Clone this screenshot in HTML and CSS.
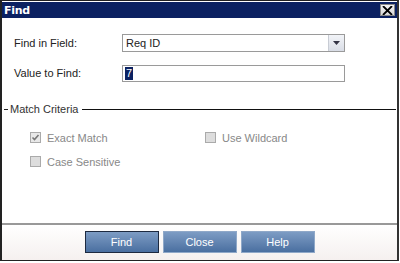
FILE: index.html
```html
<!DOCTYPE html>
<html>
<head>
<meta charset="utf-8">
<link rel="stylesheet" href="styles.css">
</head>
<body>
<div class="dialog">
  <div class="titlebar">
    <span class="title">Find</span>
    <span class="close"><svg width="11" height="9" viewBox="0 0 11 9"><path d="M1 0 L10 9 M10 0 L1 9" stroke="#000" stroke-width="1.8"/></svg></span>
  </div>
  <div class="content">
    <div class="row">
      <span class="label">Find in Field:</span>
      <div class="select">
        <span class="select-text">Req ID</span>
        <span class="arrow"><svg width="7" height="4" viewBox="0 0 7 4"><path d="M0 0 H7 L3.5 4 Z" fill="#334"/></svg></span>
      </div>
    </div>
    <div class="row row2">
      <span class="label">Value to Find:</span>
      <div class="input"><span class="sel">7</span></div>
    </div>
    <div class="group">
      <span class="dash"></span><span class="group-title">Match Criteria</span><span class="line"></span>
    </div>
    <div class="checks">
      <label class="check"><span class="box checked"><svg width="9" height="9" viewBox="0 0 9 9"><path d="M1.5 4.5 L3.5 6.5 L7.5 2" stroke="#777" stroke-width="1.6" fill="none"/></svg></span>Exact Match</label>
      <label class="check"><span class="box"></span>Use Wildcard</label>
      <label class="check"><span class="box"></span>Case Sensitive</label>
    </div>
  </div>
  <div class="footer">
    <button class="btn btn-default">Find</button>
    <button class="btn">Close</button>
    <button class="btn">Help</button>
  </div>
</div>
</body>
</html>
```
FILE: styles.css
```css
html, body { margin: 0; padding: 0; background: #fff; }
body { width: 400px; height: 263px; overflow: hidden; font-family: "Liberation Sans", Arial, sans-serif; font-size: 11px; color: #222; }
.dialog {
  box-sizing: border-box; width: 399px; height: 261px;
  border: 1px solid #222; border-left: 2px solid #222; border-right: 2px solid #333;
  background: #fff; display: flex; flex-direction: column;
}
.titlebar {
  height: 16px; margin-top: 1px; background: #0b2161;
  display: flex; align-items: center; justify-content: space-between; padding: 0 2px 0 2px;
}
.title { color: #fff; font-weight: bold; font-size: 11px; font-family: "DejaVu Sans", sans-serif; letter-spacing: -0.3px; }
.close {
  width: 15px; height: 12px; background: linear-gradient(#f4f4f4, #d8d8d8); border: 1px solid #888;
  box-sizing: border-box; display: flex; align-items: center; justify-content: center;
}
.content { flex: 1; padding: 16px 0 0 0; }
.row { display: flex; align-items: center; height: 18px; }
.row2 { margin-top: 12px; }
.label { width: 108px; padding-left: 12px; color: #222; }
.select {
  box-sizing: border-box; width: 223px; height: 18px; border: 1px solid #9a9a9a; background: #fff;
  display: flex; align-items: center; justify-content: space-between;
}
.select-text { padding-left: 3px; }
.arrow {
  width: 15px; height: 16px; background: linear-gradient(#f2f4f8, #d9dde6); border-left: 1px solid #c8ccd4;
  display: flex; align-items: center; justify-content: center;
}
.input {
  box-sizing: border-box; width: 223px; height: 17px; border: 1px solid #9a9a9a; background: #fff;
  display: flex; align-items: center; padding-left: 2px;
}
.sel { background: #0b2161; color: #fff; padding: 0 1px; line-height: 13px; }
.group { display: flex; align-items: center; margin-top: 21px; }
.dash { width: 4px; height: 1px; background: #222; margin-left: 2px; }
.group-title { padding: 0 4px 0 2px; color: #333; }
.line { flex: 1; height: 1px; background: #111; margin-right: 1px; }
.checks {
  display: grid; grid-template-columns: 175px 180px; row-gap: 9px; padding: 15px 0 0 28px;
}
.check { display: flex; align-items: center; color: #888; height: 15px; }
.box {
  box-sizing: border-box; width: 11px; height: 11px; border: 1px solid #aaa;
  background: #ddd; margin-right: 6px; display: flex; align-items: center; justify-content: center;
}
.box.checked { background: #e8e8e8; }
.footer {
  height: 37px; border-top: 2px solid #999; background: linear-gradient(#fff, #f5f0ef);
  display: flex; justify-content: center; align-items: flex-start; gap: 4px; padding-top: 6px; box-sizing: border-box;
}
.btn {
  width: 74px; height: 22px; border: 1px solid #8fa8c8; color: #fff; font-family: "Liberation Sans", Arial, sans-serif;
  font-size: 11px; background: linear-gradient(#7d9cc4, #4a6fa0); padding: 0; margin: 0;
}
.btn-default { border: 1px solid #1d2a40; }
```
